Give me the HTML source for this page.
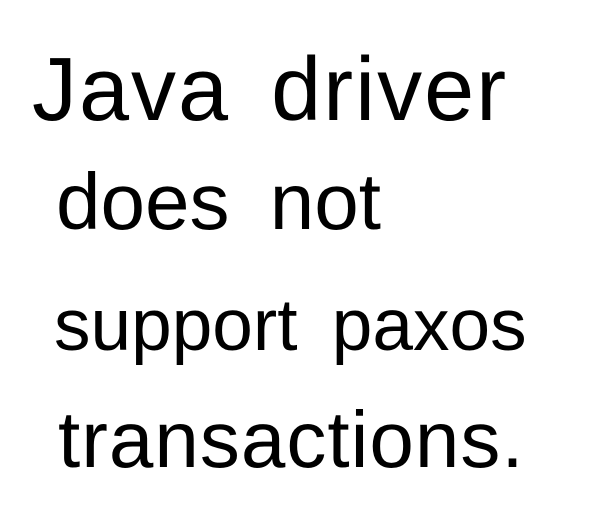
<!DOCTYPE html>
<html>
<head>
<meta charset="utf-8">
<style>
html,body{margin:0;padding:0;background:#fff;}
body{width:594px;height:522px;position:relative;overflow:hidden;font-family:"Liberation Sans",sans-serif;color:#000;}
.l{position:absolute;white-space:nowrap;line-height:80px;font-size:80px;}
</style>
</head>
<body>
<div class="l" style="left:32px;top:45px;font-size:90px;line-height:90px;letter-spacing:2px;word-spacing:14px;">Java driver</div>
<div class="l" style="left:56px;top:162px;word-spacing:18px;">does not</div>
<div class="l" style="left:54px;top:286px;font-size:73px;word-spacing:14px;">support paxos</div>
<div class="l" style="left:58px;top:400px;letter-spacing:1px;">transactions.</div>
</body>
</html>
